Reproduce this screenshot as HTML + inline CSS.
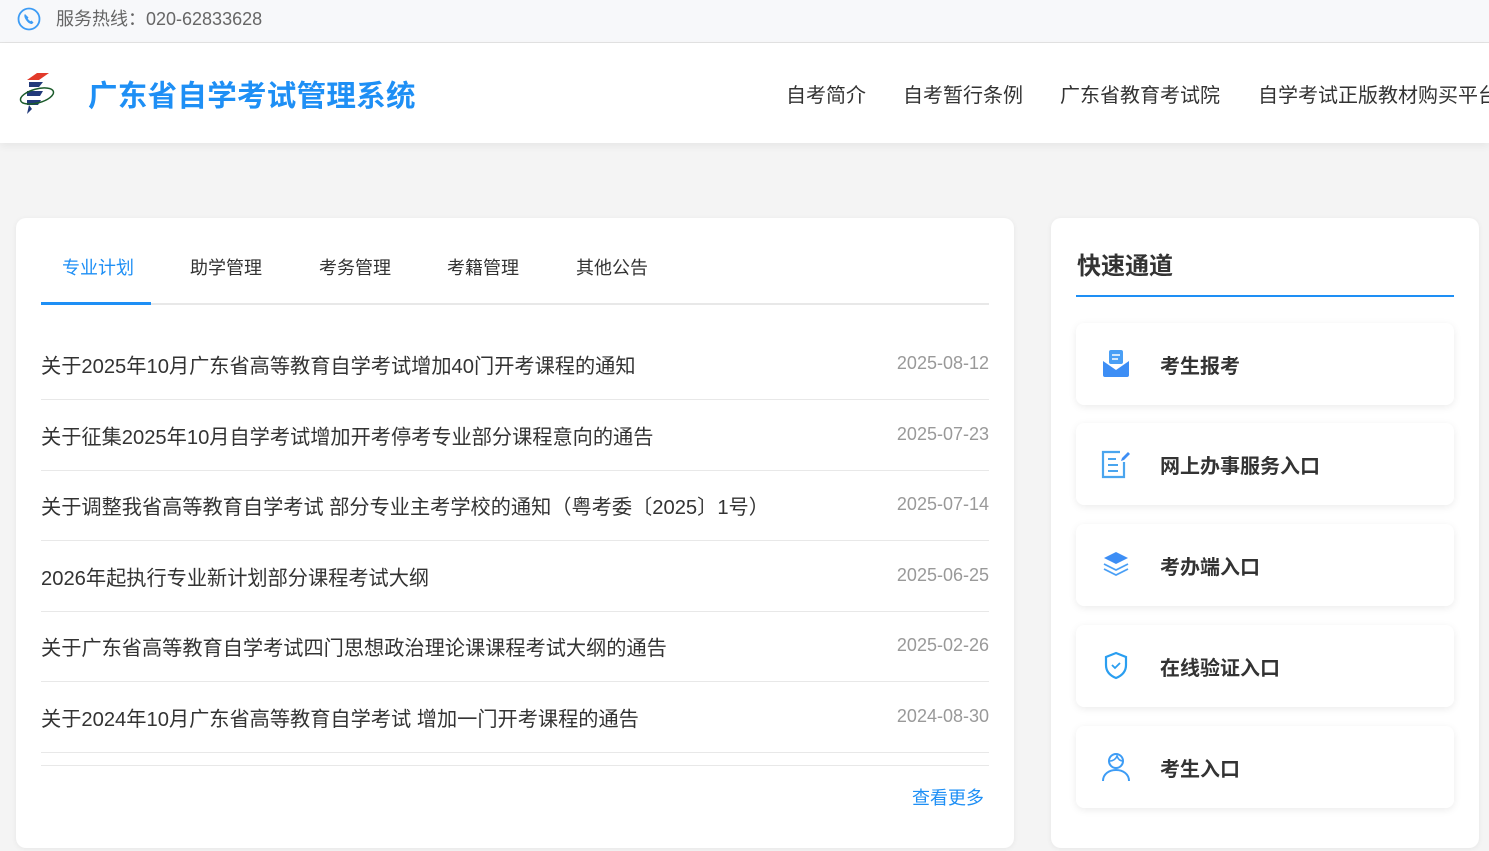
<!DOCTYPE html>
<html><head><meta charset="utf-8"><style>
*{margin:0;padding:0;box-sizing:border-box}
body{width:1489px;height:851px;overflow:hidden;background:#f4f4f4;font-family:"Liberation Sans","Noto Sans CJK SC",sans-serif;position:relative}
.top{position:absolute;left:0;top:0;width:1489px;height:43px;background:#f7f8fa;border-bottom:1px solid #e3e3e3}
.top span{position:absolute;left:56px;top:5px;font-size:18px;color:#666}
.hdr{position:absolute;left:0;top:43px;width:1489px;height:100px;background:#fff;box-shadow:0 3px 8px rgba(0,0,0,.06)}
.title{position:absolute;left:88px;top:30px;font-size:29.5px;font-weight:bold;color:#1e8ff5;letter-spacing:0.3px}
.nav{position:absolute;top:36px;font-size:20px;color:#333;white-space:nowrap}
.card{position:absolute;background:#fff;border-radius:10px;box-shadow:0 1px 6px rgba(0,0,0,.06)}
.tab{position:absolute;top:36px;font-size:18px;color:#333}
.row{position:absolute;left:25px;width:948px;height:71px;border-bottom:1px solid #e8e8e8}
.row .t{position:absolute;left:0;top:21px;font-size:20.2px;color:#333;white-space:nowrap}
.row .d{position:absolute;right:0;top:24px;font-size:18px;color:#999}
.q{position:absolute;left:25px;width:378px;height:82px;background:#fff;border-radius:8px;box-shadow:0 2px 8px rgba(0,0,0,.08)}
.q svg{position:absolute;left:24px;top:25px}
.q span{position:absolute;left:84px;top:27px;font-size:20px;font-weight:bold;color:#333}
</style></head><body>
<div class="top">
<svg style="position:absolute;left:17px;top:7px" width="24" height="24" viewBox="0 0 24 24"><circle cx="12" cy="12" r="10.5" fill="none" stroke="#3d9cf5" stroke-width="1.8"/><path d="M8 7c-1 1-1 3 1 6s4 4 6 4l1.5-1.5-2-2-1 .8c-1-.5-2.3-1.8-2.8-2.8l.8-1-2-2z" fill="#3d9cf5"/></svg>
<span>服务热线：020-62833628</span></div>
<div class="hdr">
<svg style="position:absolute;left:17px;top:29px" width="40" height="46" viewBox="0 0 40 46"><path d="M10 8l10-7h12l-10 7z" fill="#e23a2a"/><path d="M12 10h14l-4 5H12z" fill="#223a7a"/><path d="M10 19h16l-3 5H10z" fill="#223a7a"/><path d="M10 28h14l-3 5H10z" fill="#223a7a"/><path d="M12 33l-2 9 5-5z" fill="#223a7a"/><ellipse cx="20" cy="24" rx="17" ry="7" fill="none" stroke="#1a5a2a" stroke-width="1.5" transform="rotate(-15 20 24)"/></svg>
<div class="title">广东省自学考试管理系统</div>
<div class="nav" style="left:786px">自考简介</div>
<div class="nav" style="left:903px">自考暂行条例</div>
<div class="nav" style="left:1060px">广东省教育考试院</div>
<div class="nav" style="left:1258px">自学考试正版教材购买平台</div>
</div>
<div class="card" style="left:16px;top:218px;width:998px;height:630px">
<div class="tab" style="left:46px;color:#1e8ff5">专业计划</div>
<div class="tab" style="left:174px">助学管理</div>
<div class="tab" style="left:303px">考务管理</div>
<div class="tab" style="left:431px">考籍管理</div>
<div class="tab" style="left:560px">其他公告</div>
<div style="position:absolute;left:25px;top:85px;width:948px;height:2px;background:#e8e8e8"></div>
<div style="position:absolute;left:25px;top:84px;width:110px;height:3px;background:#1e8ff5"></div>
<div class="row" style="top:111px"><div class="t">关于2025年10月广东省高等教育自学考试增加40门开考课程的通知</div><div class="d">2025-08-12</div></div>
<div class="row" style="top:182px"><div class="t">关于征集2025年10月自学考试增加开考停考专业部分课程意向的通告</div><div class="d">2025-07-23</div></div>
<div class="row" style="top:252px"><div class="t">关于调整我省高等教育自学考试 部分专业主考学校的通知（粤考委〔2025〕1号）</div><div class="d">2025-07-14</div></div>
<div class="row" style="top:323px"><div class="t">2026年起执行专业新计划部分课程考试大纲</div><div class="d">2025-06-25</div></div>
<div class="row" style="top:393px"><div class="t">关于广东省高等教育自学考试四门思想政治理论课课程考试大纲的通告</div><div class="d">2025-02-26</div></div>
<div class="row" style="top:464px"><div class="t">关于2024年10月广东省高等教育自学考试 增加一门开考课程的通告</div><div class="d">2024-08-30</div></div>
<div style="position:absolute;left:25px;top:547px;width:948px;height:1px;background:#e8e8e8"></div>
<div style="position:absolute;left:896px;top:566px;font-size:18px;color:#1e8ff5">查看更多</div>
</div>
<div class="card" style="left:1051px;top:218px;width:428px;height:630px">
<div style="position:absolute;left:26px;top:28px;font-size:24px;font-weight:bold;color:#333">快速通道</div>
<div style="position:absolute;left:25px;top:77px;width:378px;height:2px;background:#1e8ff5"></div>
<div class="q" style="top:105px"><svg width="32" height="32" viewBox="0 0 32 32"><rect x="9" y="2" width="14" height="14" rx="2" fill="#4a9ff5"/><path d="M12 7h8M12 11h6" stroke="#fff" stroke-width="1.5"/><path d="M3 13l13 9 13-9v14a2 2 0 0 1-2 2H5a2 2 0 0 1-2-2z" fill="#3d8ef5"/></svg><span>考生报考</span></div>
<div class="q" style="top:205px"><svg width="32" height="32" viewBox="0 0 32 32"><path d="M20 4H3v25h21V14" fill="none" stroke="#4aa5ee" stroke-width="2.2"/><path d="M8 11h8M8 17h10M8 23h10" stroke="#4aa5ee" stroke-width="2"/><path d="M22 10l6-6 2 2-6 6-3 1z" fill="#3d8ef5"/></svg><span>网上办事服务入口</span></div>
<div class="q" style="top:306px"><svg width="32" height="32" viewBox="0 0 32 32"><path d="M16 3l12 6-12 6-12-6z" fill="#3d8ef5"/><path d="M4 15l12 6 12-6M4 20l12 6 12-6" fill="none" stroke="#4a9ff5" stroke-width="1.8"/></svg><span>考办端入口</span></div>
<div class="q" style="top:407px"><svg width="32" height="32" viewBox="0 0 32 32"><path d="M16 3l10 4v8c0 7-5 11-10 13-5-2-10-6-10-13V7z" fill="none" stroke="#2a9ef0" stroke-width="2.2"/><path d="M12 15l3 3 5-5" fill="none" stroke="#2a9ef0" stroke-width="1.8"/></svg><span>在线验证入口</span></div>
<div class="q" style="top:508px"><svg width="32" height="32" viewBox="0 0 32 32"><circle cx="16" cy="10" r="7" fill="none" stroke="#3d9cf5" stroke-width="2"/><path d="M10 10c3 0 6-2 7-5 1 3 3 5 6 5" fill="none" stroke="#3d9cf5" stroke-width="1.6"/><path d="M3 30c0-7 6-11 13-11s13 4 13 11" fill="none" stroke="#3d9cf5" stroke-width="2"/></svg><span>考生入口</span></div>
</div>
</body></html>
